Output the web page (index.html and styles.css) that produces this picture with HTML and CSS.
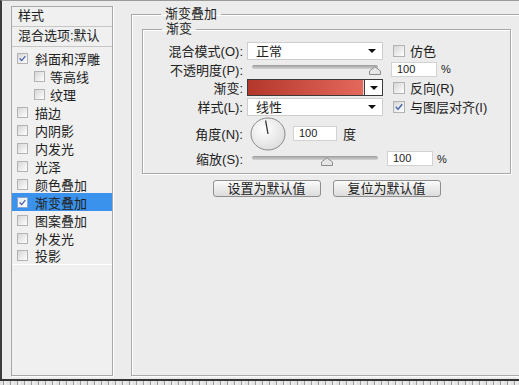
FILE: index.html
```html
<!DOCTYPE html>
<html lang="zh-CN">
<head>
    <meta charset="UTF-8">
    <title>图层样式</title>
    <link rel="stylesheet" href="styles.css">
</head>
<body>
    <div class="window">
        <div class="dialog">
            <div class="style-list">
                <div class="list-head">样式</div>
                <div class="list-head">混合选项:默认</div>
                <div class="list-body">
                    <div class="list-item"><span class="check on"><svg viewBox="0 0 11 11"><path d="M2 5.5 L4.5 8 L9 2.5" /></svg></span>斜面和浮雕</div>
                    <div class="list-item sub"><span class="check"></span>等高线</div>
                    <div class="list-item sub"><span class="check"></span>纹理</div>
                    <div class="list-item"><span class="check"></span>描边</div>
                    <div class="list-item"><span class="check"></span>内阴影</div>
                    <div class="list-item"><span class="check"></span>内发光</div>
                    <div class="list-item"><span class="check"></span>光泽</div>
                    <div class="list-item"><span class="check"></span>颜色叠加</div>
                    <div class="list-item selected"><span class="check on"><svg viewBox="0 0 11 11"><path d="M2 5.5 L4.5 8 L9 2.5" /></svg></span>渐变叠加</div>
                    <div class="list-item"><span class="check"></span>图案叠加</div>
                    <div class="list-item"><span class="check"></span>外发光</div>
                    <div class="list-item last"><span class="check"></span>投影</div>
                </div>
            </div>

            <fieldset class="group outer">
                <legend>渐变叠加</legend>
                <fieldset class="group inner">
                    <legend>渐变</legend>
                    <div class="form-grid">
                        <label class="field-label">混合模式(O):</label>
                        <div class="select"><span>正常</span><span class="caret"></span></div>
                        <div class="opt"><span class="check"></span>仿色</div>

                        <label class="field-label">不透明度(P):</label>
                        <div class="slider">
                            <div class="track"></div>
                            <svg class="thumb" style="left: 122px" viewBox="0 0 12 9"><path d="M0.5 8.5 V5 L6 0.8 L11.5 5 V8.5 Z" /></svg>
                        </div>
                        <div class="num-field"><span class="num">100</span><span>%</span></div>

                        <label class="field-label">渐变:</label>
                        <div class="gradient-picker">
                            <div class="gradient-swatch"></div>
                            <div class="gradient-btn"><span class="caret"></span></div>
                        </div>
                        <div class="opt"><span class="check"></span>反向(R)</div>

                        <label class="field-label">样式(L):</label>
                        <div class="select"><span>线性</span><span class="caret"></span></div>
                        <div class="opt"><span class="check on"><svg viewBox="0 0 11 11"><path d="M2 5.5 L4.5 8 L9 2.5" /></svg></span>与图层对齐(I)</div>

                        <label class="field-label">角度(N):</label>
                        <div class="angle">
                            <svg class="dial" viewBox="0 0 36 34">
                                <defs>
                                    <radialGradient id="dialFill" cx="40%" cy="35%" r="70%">
                                        <stop offset="0" stop-color="#ffffff" />
                                        <stop offset="1" stop-color="#dcdcdc" />
                                    </radialGradient>
                                </defs>
                                <ellipse cx="18" cy="17" rx="17" ry="16" fill="url(#dialFill)" stroke="#8a8a8a" />
                                <line x1="18" y1="17" x2="15.6" y2="3.5" stroke="#333" stroke-width="1.3" />
                            </svg>
                            <span class="num wide">100</span>
                            <span class="unit">度</span>
                        </div>

                        <label class="field-label">缩放(S):</label>
                        <div class="slider">
                            <div class="track"></div>
                            <svg class="thumb" style="left: 74px" viewBox="0 0 12 9"><path d="M0.5 8.5 V5 L6 0.8 L11.5 5 V8.5 Z" /></svg>
                        </div>
                        <div class="num-field"><span class="num">100</span><span>%</span></div>
                    </div>
                </fieldset>

                <div class="buttons">
                    <button class="btn">设置为默认值</button>
                    <button class="btn">复位为默认值</button>
                </div>
            </fieldset>
        </div>
        <div class="status-strip"></div>
    </div>
</body>
</html>
```

FILE: styles.css
```css
* {
    margin: 0;
    padding: 0;
    box-sizing: border-box;
}

body {
    font-family: "Liberation Sans", "Noto Sans CJK SC", sans-serif;
    font-size: 13px;
    color: #222;
    background: #ececec;
}

.window {
    width: 519px;
    height: 385px;
    display: flex;
    flex-direction: column;
    overflow: hidden;
    background: #ececec;
}

.dialog {
    height: 379px;
    flex-shrink: 0;
    display: flex;
    align-items: flex-start;
    padding: 5px 0 0 9px;
    border-left: 2px solid #3c3c3c;
    border-top: 1px solid #9a9a9a;
    overflow: hidden;
}

/* lista de estilos a esquerda */
.style-list {
    width: 102px;
    height: 370px;
    flex-shrink: 0;
    border: 1px solid #a8a8a8;
    background: #f0f0f0;
    box-shadow: 1px 1px 0 #ffffff;
}

.list-head {
    height: 20px;
    line-height: 18px;
    padding-left: 6px;
    border-bottom: 1px solid #c6c6c6;
    white-space: nowrap;
}

.list-body {
    padding-top: 2px;
}

.list-item {
    height: 18px;
    display: flex;
    align-items: center;
    gap: 7px;
    padding-left: 5px;
    white-space: nowrap;
}

.list-item.sub {
    padding-left: 22px;
    gap: 5px;
}

.list-item.selected {
    background: #3a92ec;
}

.list-item.last {
    border-bottom: 1px solid #ffffff;
}

.check {
    width: 11px;
    height: 11px;
    flex-shrink: 0;
    border: 1px solid #b3b3b3;
    background: linear-gradient(135deg, #d6d6d6, #ffffff);
    display: flex;
}

.check svg {
    width: 100%;
    height: 100%;
}

.check svg path {
    fill: none;
    stroke: #4a63b0;
    stroke-width: 1.6;
}

.list-item.selected .check {
    border-color: #8aa6cc;
    background: linear-gradient(135deg, #e4e8f0, #ffffff);
}

/* paineis */
.group {
    border: 1px solid #a9a9a9;
    box-shadow: inset 1px 1px 0 #ffffff, 1px 1px 0 #ffffff;
    min-width: 0;
}

.group legend {
    margin-left: 19px;
    padding: 0 4px;
    line-height: 14px;
    font-size: 13px;
}

.outer {
    width: 400px;
    height: 369px;
    flex-shrink: 0;
    margin: 1px 0 0 18px;
    padding: 1px 0 0 10px;
}

.inner {
    width: 369px;
    padding: 5px 0 7px 0;
}

.form-grid {
    display: grid;
    grid-template-columns: 100px 136px 90px;
    grid-template-rows: 19px 18px 19px 19px 35px 15px;
    column-gap: 4px;
    align-items: center;
}

.form-grid > :nth-child(3n) {
    margin-left: 4px;
}

.field-label {
    text-align: right;
    white-space: nowrap;
}

.select {
    height: 18px;
    background: #ffffff;
    border: 1px solid #cdcdcd;
    display: flex;
    align-items: center;
    justify-content: space-between;
    padding: 0 6px 0 8px;
}

.caret {
    width: 0;
    height: 0;
    border-left: 4px solid transparent;
    border-right: 4px solid transparent;
    border-top: 4px solid #111;
}

.opt {
    display: flex;
    align-items: center;
    gap: 5px;
    padding-left: 2px;
    white-space: nowrap;
}

.opt .check {
    width: 12px;
    height: 12px;
}

.slider {
    position: relative;
    height: 18px;
    padding: 5px 5px 0 5px;
    align-self: start;
}

.track {
    height: 4px;
    border-radius: 2px;
    background: linear-gradient(#9c9c9c, #d4d4d4);
}

.thumb {
    position: absolute;
    top: 6px;
    width: 12px;
    height: 9px;
}

.thumb path {
    fill: #e6e6e6;
    stroke: #8c8c8c;
}

.num-field {
    display: flex;
    align-items: center;
    gap: 4px;
    font-size: 11px;
}

.num {
    width: 46px;
    height: 15px;
    line-height: 13px;
    padding-left: 5px;
    background: #ffffff;
    border: 1px solid #d2d2d2;
    font-size: 11px;
}

.num.wide {
    width: 44px;
}

.gradient-picker {
    height: 17px;
    display: flex;
    border: 1px solid #3a3a3a;
    background: #d9d9d9;
}

.gradient-swatch {
    flex: 1;
    background: linear-gradient(90deg, #b3372a, #e4685b);
    margin-right: 1px;
}

.gradient-btn {
    width: 18px;
    background: #ffffff;
    border-left: 1px solid #3a3a3a;
    display: flex;
    align-items: center;
    justify-content: center;
}

.angle {
    grid-column: 2 / 4;
    display: flex;
    align-items: center;
}

.dial {
    width: 36px;
    height: 34px;
    margin-left: 3px;
}

.angle .num {
    margin-left: 7px;
}

.unit {
    margin-left: 6px;
}

.buttons {
    width: 369px;
    display: flex;
    justify-content: center;
    gap: 12px;
    margin-top: 6px;
}

.btn {
    width: 108px;
    height: 17px;
    font-family: inherit;
    font-size: 13px;
    line-height: 15px;
    color: #222;
    border: 1px solid #8f8f8f;
    border-radius: 3px;
    background: linear-gradient(#fbfbfb, #dcdcdc);
}

.status-strip {
    flex: 1;
    border-top: 2px solid #333333;
    background: repeating-linear-gradient(90deg, #e2e2e2 0 3px, #9a9a9a 3px 4px, #eaeaea 4px 7px);
}
```
